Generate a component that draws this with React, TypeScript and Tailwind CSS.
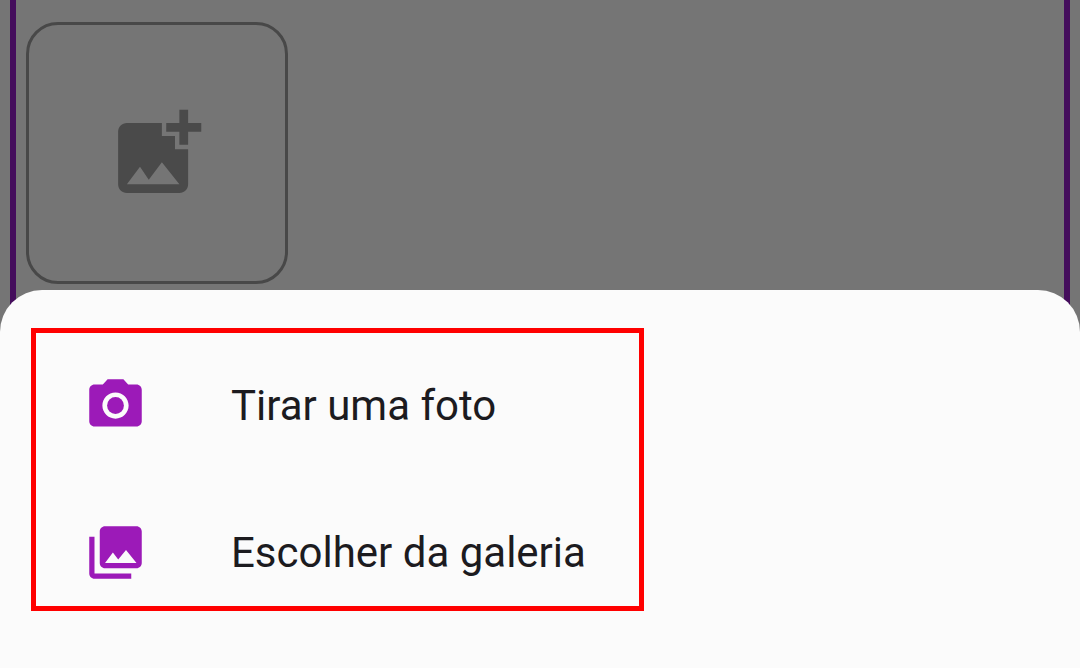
const fontRoboto = "font-['Roboto',sans-serif]";

/* ─── Material icons ─────────────────────────────────────── */
function AddPhotoIcon() {
  return (
    <svg viewBox="0 0 24 24" className="w-[105px] h-[105px] fill-[#4a4a4a]">
      <path d="M19 7v2.99s-1.99.01-2 0V7h-3s.01-1.99 0-2h3V2h2v3h3v2h-3zm-3 4V8h-3V5H5c-1.1 0-2 .9-2 2v12c0 1.1.9 2 2 2h12c1.1 0 2-.9 2-2v-8h-3zM5 19l3-4 2 3 3-4 4 5H5z" />
    </svg>
  );
}

function CameraIcon() {
  return (
    <svg viewBox="0 0 24 24" className="w-[63px] h-[63px] fill-[#9c1ab8]">
      <circle cx="12" cy="12" r="3.2" />
      <path d="M9 2L7.17 4H4c-1.1 0-2 .9-2 2v12c0 1.1.9 2 2 2h16c1.1 0 2-.9 2-2V6c0-1.1-.9-2-2-2h-3.17L15 2H9zm3 15c-2.76 0-5-2.24-5-5s2.24-5 5-5 5 2.24 5 5-2.24 5-5 5z" />
    </svg>
  );
}

function GalleryIcon() {
  return (
    <svg viewBox="0 0 24 24" className="w-[63px] h-[63px] fill-[#9c1ab8]">
      <path d="M22 16V4c0-1.1-.9-2-2-2H8c-1.1 0-2 .9-2 2v12c0 1.1.9 2 2 2h12c1.1 0 2-.9 2-2zm-11-4l2.03 2.71L16 11l4 5H8l3-4zM2 6v14c0 1.1.9 2 2 2h14v-2H4V6H2z" />
    </svg>
  );
}

/* ─── Sheet row ──────────────────────────────────────────── */
function SheetRow({ icon, label }: { icon: React.ReactNode; label: string }) {
  return (
    <div className="flex items-center h-[147px] pl-[84px]">
      {icon}
      <span className="ml-[84px] text-[42px] leading-[63px] text-[#1c1b1f]">{label}</span>
    </div>
  );
}

export default function App() {
  return (
    <div className={`relative w-[1080px] h-[668px] overflow-hidden bg-[#757575] ${fontRoboto}`}>
      <div className="mx-[10px] h-[320px] border-x-[6px] border-[#440d5c] pl-[10px] pt-[22px]">
        <div className="flex items-center justify-center w-[262px] h-[262px] rounded-[32px] border-[3px] border-[#484848]">
          <AddPhotoIcon />
        </div>
      </div>

      <div className="relative -mt-[30px] h-[378px] rounded-t-[42px] bg-[#fbfbfb] py-[42px]">
        <SheetRow icon={<CameraIcon />} label="Tirar uma foto" />
        <SheetRow icon={<GalleryIcon />} label="Escolher da galeria" />
      </div>

      {/* red annotation frame */}
      <div className="absolute left-[31px] top-[328px] w-[613px] h-[283px] border-[5px] border-[#ff0000]" />
    </div>
  );
}
